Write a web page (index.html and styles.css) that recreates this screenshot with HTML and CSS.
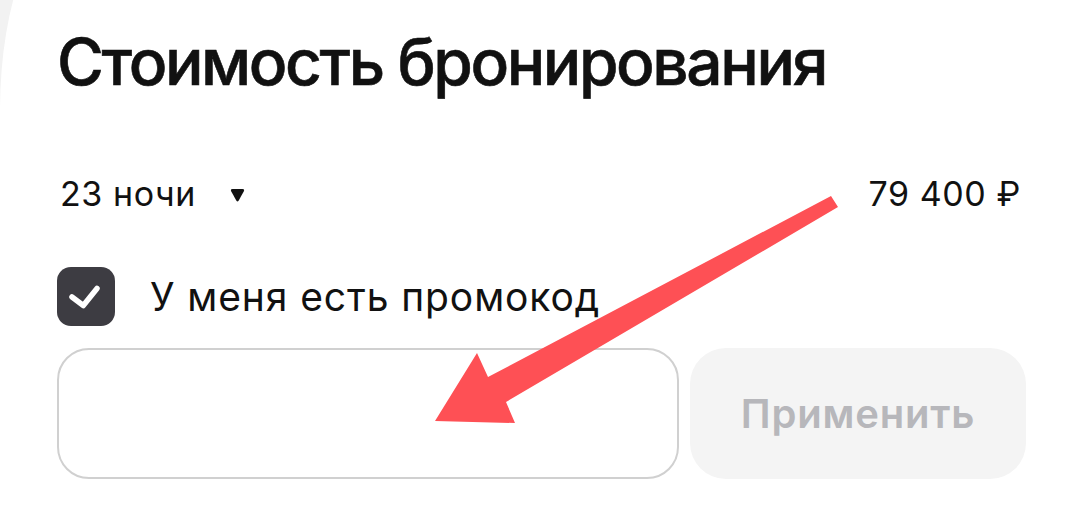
FILE: index.html
```html
<!DOCTYPE html>
<html>
<head>
  <title>Стоимость бронирования</title>
  <link rel="stylesheet" href="styles.css">
</head>
<body>
  <div class="card">
    <h1 class="title">Стоимость бронирования</h1>

    <div class="nights-row">
      <div class="nights">
        23 ночи
        <svg class="caret" width="15" height="13" viewBox="0 0 14 12">
          <path d="M1.2 2.2 Q0 0 2.4 0 H11.6 Q14 0 12.8 2.2 L8 10.8 Q7 12.2 6 10.8 Z" fill="#111"/>
        </svg>
      </div>
      <div class="price">79 400 ₽</div>
    </div>

    <label class="promo-check">
      <span class="checkbox">
        <svg width="58" height="59" viewBox="0 0 58 59">
          <path d="M15 30 L26.3 38.5 L40 21.5" fill="none" stroke="#fff" stroke-width="5.5" stroke-linecap="round" stroke-linejoin="round"/>
        </svg>
      </span>
      <span class="promo-label">У меня есть промокод</span>
    </label>

    <div class="promo-row">
      <div class="promo-input"></div>
      <button class="apply-btn">Применить</button>
    </div>
  </div>

  <!-- annotation arrow -->
  <svg class="arrow" width="1067" height="508" viewBox="0 0 1067 508">
    <polygon points="831,196 488,377 477,353 435,421 515,423 506,402 838,207" fill="#fe5055"/>
  </svg>
</body>
</html>
```

FILE: styles.css
```css
body {
  margin: 0;
  padding: 0;
  background: #f2f2f2;
  color: #111;
  font-family: Inter, "Noto Sans", sans-serif;
  overflow: hidden;
  height: 508px;
  position: relative;
}

/* White sheet, its rounded corner peeks in at top left */
.card {
  background: #fff;
  margin-top: -90px;
  padding: 112px 42px 0 57px;
  border-top-left-radius: 80px 200px;
  min-height: 600px;
  box-sizing: border-box;
}

.title {
  margin: 0;
  font-size: 64px;
  line-height: 80px;
  font-weight: 500;
  letter-spacing: -2.4px;
  -webkit-text-stroke: 0.6px #111;
}

/* Nights + total */
.nights-row {
  display: flex;
  justify-content: space-between;
  align-items: center;
  margin-top: 72px;
  font-size: 34px;
  line-height: 40px;
  letter-spacing: 0.6px;
}

.nights {
  display: flex;
  align-items: center;
  gap: 34px;
  padding-left: 3px;
}

.caret {
  display: block;
  margin-top: 2px;
}

.price {
  padding-right: 4px;
}

/* Promo checkbox */
.promo-check {
  display: flex;
  align-items: center;
  gap: 35px;
  margin-top: 53px;
}

.checkbox {
  width: 58px;
  height: 59px;
  border-radius: 14px;
  background: #3d3c42;
  display: block;
}

.checkbox svg {
  display: block;
}

.promo-label {
  font-size: 39px;
  line-height: 44px;
  letter-spacing: 0.9px;
}

/* Promo input + apply */
.promo-row {
  display: grid;
  grid-template-columns: 622px 336px;
  gap: 11px;
  margin-top: 22px;
}

.promo-input {
  height: 131px;
  box-sizing: border-box;
  border: 2px solid #d0d0d0;
  border-radius: 32px;
  background: #fff;
}

.apply-btn {
  height: 131px;
  border: none;
  border-radius: 36px;
  background: #f4f4f4;
  color: #b7b7bb;
  font-family: Inter, "Noto Sans", sans-serif;
  font-size: 40px;
  font-weight: 600;
  letter-spacing: 0.8px;
  padding: 0;
}

.arrow {
  position: absolute;
  top: 0;
  left: 0;
  pointer-events: none;
}
```
